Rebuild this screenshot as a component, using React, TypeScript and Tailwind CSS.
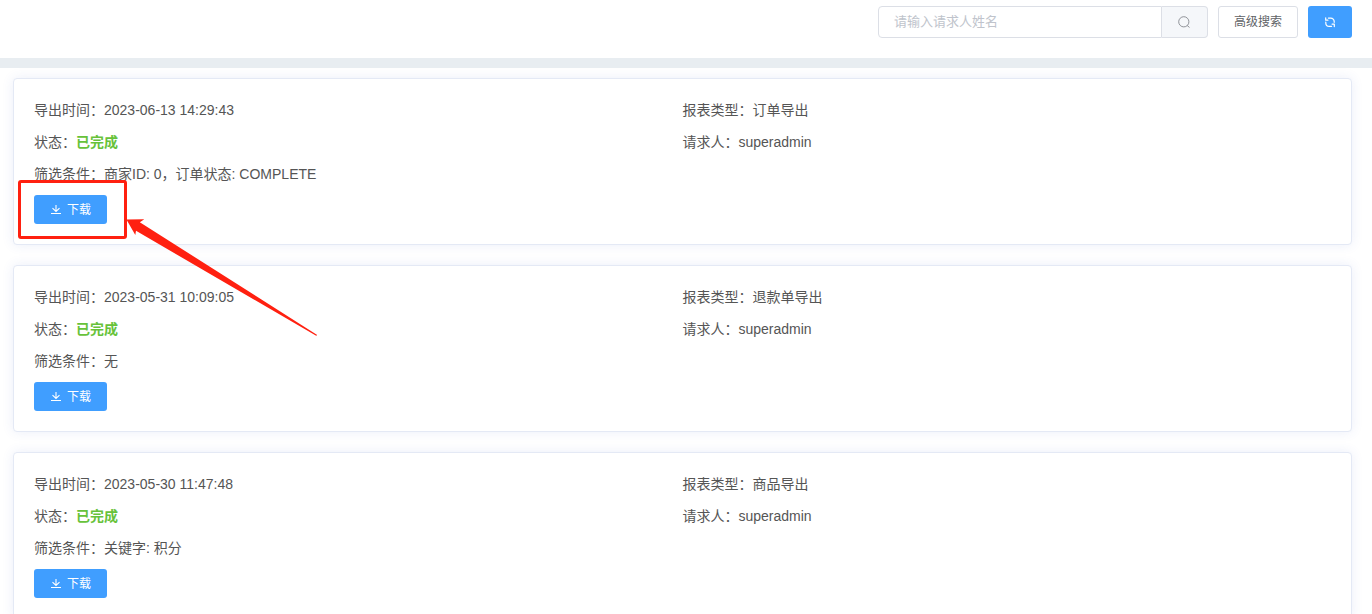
import { useState } from "react";

type Report = {
  time: string;
  kind: string;
  status: string;
  requester: string;
  filter: string;
  highlighted?: boolean;
};

const reports: Report[] = [
  {
    time: "2023-06-13 14:29:43",
    kind: "订单导出",
    status: "已完成",
    requester: "superadmin",
    filter: "商家ID: 0，订单状态: COMPLETE",
    highlighted: true,
  },
  {
    time: "2023-05-31 10:09:05",
    kind: "退款单导出",
    status: "已完成",
    requester: "superadmin",
    filter: "无",
  },
  {
    time: "2023-05-30 11:47:48",
    kind: "商品导出",
    status: "已完成",
    requester: "superadmin",
    filter: "关键字: 积分",
  },
];

function SearchIcon() {
  return (
    <svg className="size-[14px]" viewBox="0 0 14 14" fill="none" stroke="currentColor" strokeWidth="1" aria-hidden="true">
      <circle cx="6.8" cy="6.8" r="5.1" />
      <path d="M10.4 10.7l1.8 1.5" strokeLinecap="round" />
    </svg>
  );
}

function RefreshIcon() {
  return (
    <svg className="size-3" viewBox="0 0 12 12" fill="none" stroke="currentColor" strokeWidth="1.2" strokeLinecap="round" strokeLinejoin="round" aria-hidden="true">
      <path d="M4.4 2.1h2.4a3.4 3.4 0 0 1 3.4 3.4v.8" />
      <path d="M1.7 1.8v2.4h2.2" />
      <path d="M7.6 10.3H5.2a3.4 3.4 0 0 1-3.4-3.4v-.8" />
      <path d="M10.3 10.6V8.2H8.1" />
    </svg>
  );
}

function DownloadIcon() {
  return (
    <svg className="size-3" viewBox="0 0 12 12" fill="none" stroke="currentColor" strokeWidth="1.1" aria-hidden="true">
      <path d="M6 1v6.2M2.5 4.2L6 7.5l3.5-3.3M1 9.5h10" />
    </svg>
  );
}

function Callout() {
  return (
    <div className="pointer-events-none absolute -top-[15px] -left-4 z-10 h-[59px] w-[109px] rounded-[3px] border-3 border-[#ff2010]" aria-hidden="true">
      <svg className="absolute top-9 left-[106px] h-[118px] w-[192px]" viewBox="0 0 192 118" fill="#ff2010">
        <path d="M-.5 .5L17.3.3 12.8 3.2 190.2 116 189.2 116.8 9 11.8 8.3 16z" />
      </svg>
    </div>
  );
}

function Field({ label, children }: { label: string; children: React.ReactNode }) {
  return (
    <div className="flex leading-[22px]">
      <dt>{label}：</dt>
      <dd>{children}</dd>
    </div>
  );
}

function ReportCard({ report }: { report: Report }) {
  return (
    <article className="rounded border border-[#e4e9f5] bg-white p-5 shadow-[0_0_12px_0_rgba(60,90,200,0.1)]">
      <dl className="grid grid-cols-2 gap-y-[10px] text-sm">
        <Field label="导出时间">{report.time}</Field>
        <Field label="报表类型">{report.kind}</Field>
        <Field label="状态">
          <span className="font-bold text-[#67c23a]">{report.status}</span>
        </Field>
        <Field label="请求人">{report.requester}</Field>
        <Field label="筛选条件">{report.filter}</Field>
      </dl>
      <div className="relative mt-[10px] flex">
        <button
          type="button"
          className="flex h-[29px] cursor-pointer items-center gap-[5px] rounded-[3px] bg-[#409eff] px-4 text-xs text-white"
        >
          <DownloadIcon />
          下载
        </button>
        {report.highlighted && <Callout />}
      </div>
    </article>
  );
}

export default function App() {
  const [name, setName] = useState("");

  return (
    <div className="min-h-screen bg-white font-['Liberation_Sans','Noto_Sans_CJK_SC',sans-serif] text-[#555555]">
      <header className="relative z-10 flex justify-end gap-[10px] border-b-10 border-[#e8edf1] bg-white px-5 pt-[6px] pb-5">
        <form className="flex h-8 w-[330px]" onSubmit={(e) => e.preventDefault()}>
          <input
            type="text"
            aria-label="请求人姓名"
            placeholder="请输入请求人姓名"
            value={name}
            onChange={(e) => setName(e.target.value)}
            className="min-w-0 flex-1 rounded-l border border-[#dcdfe6] px-[15px] text-[13px] outline-none placeholder:text-[#c0c4cc]"
          />
          <button
            type="submit"
            aria-label="搜索"
            className="flex w-[46px] cursor-pointer items-center justify-center rounded-r border border-l-0 border-[#dcdfe6] bg-[#f5f7fa] text-[#909399]"
          >
            <SearchIcon />
          </button>
        </form>
        <button type="button" className="h-8 cursor-pointer rounded-[3px] border border-[#dcdfe6] bg-white px-[15px] text-xs text-[#606266]">
          高级搜索
        </button>
        <button
          type="button"
          aria-label="刷新"
          className="flex h-8 w-11 cursor-pointer items-center justify-center rounded-[3px] bg-[#409eff] text-white"
        >
          <RefreshIcon />
        </button>
      </header>
      <main className="flex flex-col gap-5 pt-[10px] pr-5 pb-5 pl-[13px]">
        {reports.map((report) => (
          <ReportCard key={report.time} report={report} />
        ))}
      </main>
    </div>
  );
}
